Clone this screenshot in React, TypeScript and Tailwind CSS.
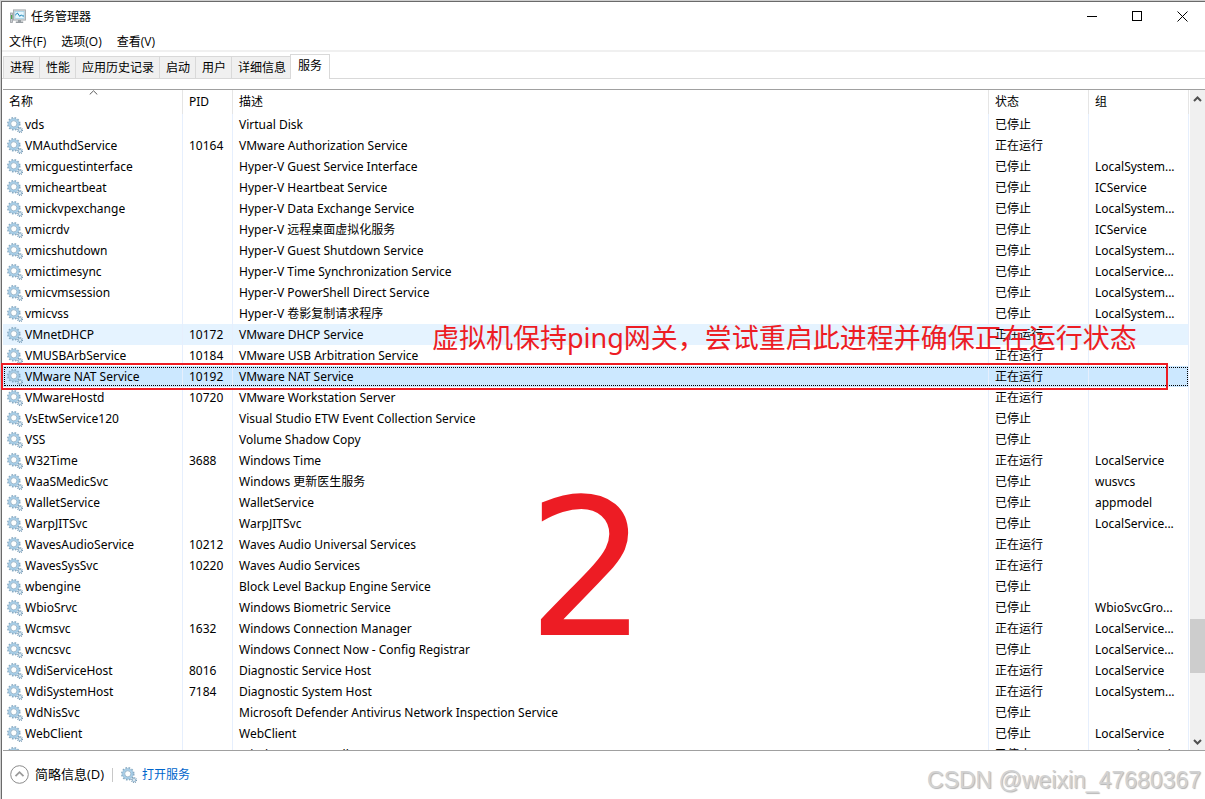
import React from "react";

type State = "已停止" | "正在运行";
type Service = [name: string, pid: string, description: string, state: State, group: string];

const services: Service[] = [
  ["vds", "", "Virtual Disk", "已停止", ""],
  ["VMAuthdService", "10164", "VMware Authorization Service", "正在运行", ""],
  ["vmicguestinterface", "", "Hyper-V Guest Service Interface", "已停止", "LocalSystem..."],
  ["vmicheartbeat", "", "Hyper-V Heartbeat Service", "已停止", "ICService"],
  ["vmickvpexchange", "", "Hyper-V Data Exchange Service", "已停止", "LocalSystem..."],
  ["vmicrdv", "", "Hyper-V 远程桌面虚拟化服务", "已停止", "ICService"],
  ["vmicshutdown", "", "Hyper-V Guest Shutdown Service", "已停止", "LocalSystem..."],
  ["vmictimesync", "", "Hyper-V Time Synchronization Service", "已停止", "LocalService..."],
  ["vmicvmsession", "", "Hyper-V PowerShell Direct Service", "已停止", "LocalSystem..."],
  ["vmicvss", "", "Hyper-V 卷影复制请求程序", "已停止", "LocalSystem..."],
  ["VMnetDHCP", "10172", "VMware DHCP Service", "正在运行", ""],
  ["VMUSBArbService", "10184", "VMware USB Arbitration Service", "正在运行", ""],
  ["VMware NAT Service", "10192", "VMware NAT Service", "正在运行", ""],
  ["VMwareHostd", "10720", "VMware Workstation Server", "正在运行", ""],
  ["VsEtwService120", "", "Visual Studio ETW Event Collection Service", "已停止", ""],
  ["VSS", "", "Volume Shadow Copy", "已停止", ""],
  ["W32Time", "3688", "Windows Time", "正在运行", "LocalService"],
  ["WaaSMedicSvc", "", "Windows 更新医生服务", "已停止", "wusvcs"],
  ["WalletService", "", "WalletService", "已停止", "appmodel"],
  ["WarpJITSvc", "", "WarpJITSvc", "已停止", "LocalService..."],
  ["WavesAudioService", "10212", "Waves Audio Universal Services", "正在运行", ""],
  ["WavesSysSvc", "10220", "Waves Audio Services", "正在运行", ""],
  ["wbengine", "", "Block Level Backup Engine Service", "已停止", ""],
  ["WbioSrvc", "", "Windows Biometric Service", "已停止", "WbioSvcGro..."],
  ["Wcmsvc", "1632", "Windows Connection Manager", "正在运行", "LocalService..."],
  ["wcncsvc", "", "Windows Connect Now - Config Registrar", "已停止", "LocalService..."],
  ["WdiServiceHost", "8016", "Diagnostic Service Host", "正在运行", "LocalService"],
  ["WdiSystemHost", "7184", "Diagnostic System Host", "正在运行", "LocalSystem..."],
  ["WdNisSvc", "", "Microsoft Defender Antivirus Network Inspection Service", "已停止", ""],
  ["WebClient", "", "WebClient", "已停止", "LocalService"],
  ["Wecsvc", "", "Windows Event Collector", "已停止", "NetworkService"],
];

const tabs = ["进程", "性能", "应用历史记录", "启动", "用户", "详细信息", "服务"];
const menus = ["文件(F)", "选项(O)", "查看(V)"];

function Gears() {
  return (
    <svg className="block size-4 shrink-0" viewBox="0 0 16 16" aria-hidden="true">
      <circle cx="6.8" cy="6.8" r="6" fill="none" stroke="#86a9c2" strokeWidth="1.5" strokeDasharray="1.7 1.44" />
      <circle cx="6.8" cy="6.8" r="4.3" fill="#f4f9fd" stroke="#a9d0ea" strokeWidth="2.2" />
      <circle cx="6.8" cy="6.8" r="5.3" fill="none" stroke="#8cb2cc" strokeWidth="0.6" />
      <circle cx="6.8" cy="6.8" r="3.1" fill="#fdfefe" stroke="#7b9db6" strokeWidth="0.7" />
      <circle cx="13" cy="13" r="2.5" fill="none" stroke="#7d9cb3" strokeWidth="1.2" strokeDasharray="1 0.96" />
      <circle cx="13" cy="13" r="1.5" fill="#fff" stroke="#93b7d0" strokeWidth="1.2" />
    </svg>
  );
}

function AppIcon() {
  return (
    <svg className="block h-4 w-4 shrink-0" viewBox="0 0 16 16" aria-hidden="true">
      <rect x="0.5" y="4" width="2" height="9.5" fill="#c9cdd0" stroke="#9a9fa3" strokeWidth="0.8" />
      <rect x="1" y="6" width="1.2" height="4" fill="#4aa84a" />
      <rect x="3.5" y="0.9" width="12" height="10.2" fill="#d3d6d8" stroke="#a3a8ac" strokeWidth="0.9" />
      <rect x="5" y="2.5" width="9" height="7" fill="#e6f6fd" stroke="#9fd2e8" strokeWidth="0.7" />
      <path d="M5.2 6.2 7.4 4l2.4 3.4 1.6-1.6 1 1.2H14" fill="none" stroke="#1583b7" strokeWidth="1" />
      <path d="M8 11h3v1.4h2.2V14H5.8v-1.6H8z" fill="#969da2" />
    </svg>
  );
}

const headCell = "relative h-6 border-r border-[#e5e5e5] p-0 pl-[6px] text-left font-normal";
const cell = "h-[21px] overflow-hidden border-r border-[#e6effd] p-0 pl-[6px] whitespace-nowrap";

function ServiceTable() {
  return (
    <table className="w-full table-fixed border-separate border-spacing-0 text-xs leading-5">
      <colgroup>
        <col className="w-[180px]" />
        <col className="w-[50px]" />
        <col />
        <col className="w-[100px]" />
        <col className="w-[100px]" />
      </colgroup>
      <thead>
        <tr>
          <th className={headCell}>
            名称
            <svg className="absolute top-0 left-[86px] h-[5px] w-[9px]" viewBox="0 0 9 5" aria-hidden="true">
              <path d="M0.7 4.5 4.5 0.8 8.3 4.5" fill="none" stroke="#5a5a5a" />
            </svg>
          </th>
          <th className={headCell}>PID</th>
          <th className={headCell}>描述</th>
          <th className={headCell}>状态</th>
          <th className={headCell}>组</th>
        </tr>
      </thead>
      <tbody>
        {services.map(([name, pid, description, state, group]) => (
          <tr
            key={name}
            className={
              name === "VMware NAT Service"
                ? "bg-[#cce8ff] outline-1 -outline-offset-2 outline-dotted outline-black"
                : name === "VMnetDHCP"
                  ? "bg-[#e5f3ff]"
                  : ""
            }
          >
            <td className="h-[21px] overflow-hidden border-r border-[#e6effd] p-0 pl-1 whitespace-nowrap">
              <div className="flex items-center gap-[2px]">
                <Gears />
                {name}
              </div>
            </td>
            <td className={cell}>{pid}</td>
            <td className={cell}>{description}</td>
            <td className={cell}>{state}</td>
            <td className={cell}>{group}</td>
          </tr>
        ))}
      </tbody>
    </table>
  );
}

function ScrollBar() {
  return (
    <div className="ml-px flex w-[15px] shrink-0 flex-col bg-[#f0f0f0]">
      <button aria-label="向上滚动" className="flex h-[17px] items-center justify-center">
        <svg className="h-[6px] w-[9px]" viewBox="0 0 9 6" aria-hidden="true">
          <path d="M1 5 4.5 1.5 8 5" fill="none" stroke="#505050" strokeWidth="2" />
        </svg>
      </button>
      <div className="flex-[512]" />
      <div className="h-[54px] bg-[#cdcdcd]" />
      <div className="flex-[60]" />
      <button aria-label="向下滚动" className="flex h-[17px] items-center justify-center">
        <svg className="h-[6px] w-[9px]" viewBox="0 0 9 6" aria-hidden="true">
          <path d="M1 1 4.5 4.5 8 1" fill="none" stroke="#505050" strokeWidth="2" />
        </svg>
      </button>
    </div>
  );
}

export default function App() {
  return (
    <div className="h-screen overflow-hidden border-t border-l border-[#cfcfcf] bg-white font-['Noto_Sans','Noto_Sans_CJK_SC',sans-serif] text-xs text-black">
      <div className="relative flex h-full flex-col border-t border-l border-[#6a6a6a]">
        <header className="flex h-[29px] items-center pl-2">
          <AppIcon />
          <h1 className="ml-[5px] flex-1">任务管理器</h1>
          <button aria-label="最小化" className="flex h-full w-[45px] items-center justify-center">
            <svg className="size-[11px]" viewBox="0 0 11 11" aria-hidden="true">
              <path d="M0 5.5h10" stroke="#000" />
            </svg>
          </button>
          <button aria-label="最大化" className="flex h-full w-[45px] items-center justify-center">
            <svg className="size-[11px]" viewBox="0 0 11 11" aria-hidden="true">
              <rect x="0.5" y="0.5" width="9" height="9" fill="none" stroke="#000" />
            </svg>
          </button>
          <button aria-label="关闭" className="flex h-full w-[45px] items-center justify-center">
            <svg className="size-[11px]" viewBox="0 0 11 11" aria-hidden="true">
              <path d="M0.5 0.5l10 10M10.5 0.5l-10 10" stroke="#000" />
            </svg>
          </button>
        </header>

        <nav className="flex h-[21px] items-center gap-[15px] border-b-2 border-[#f0f0f0] pt-[2px] pl-[7px]">
          {menus.map((label) => (
            <button key={label} className="font-['Open_Sans','Noto_Sans_CJK_SC',sans-serif]">
              {label}
            </button>
          ))}
        </nav>

        <div role="tablist" className="flex h-[27px] items-end border-b border-[#d9d9d9] pl-px">
          {tabs.map((label) =>
            label === "服务" ? (
              <button
                key={label}
                role="tab"
                aria-selected="true"
                className="-mb-px -ml-px h-[25px] border border-b-0 border-[#d9d9d9] bg-white px-[7px] pb-[2px]"
              >
                {label}
              </button>
            ) : (
              <button
                key={label}
                role="tab"
                aria-selected="false"
                className="h-[22px] border-t border-l border-[#d9d9d9] bg-[#f0f0f0] pr-[5px] pl-[6px]"
              >
                {label}
              </button>
            ),
          )}
        </div>

        <main className="relative mt-[10px] ml-px flex min-h-0 flex-1 border-y border-[#a0a0a0]">
          <div className="min-w-0 flex-1 overflow-hidden">
            <ServiceTable />
          </div>
          <ScrollBar />
          <div className="pointer-events-none absolute top-[273px] right-[37px] -left-[2px] h-[27px] border-2 border-[#ed1c24]" />
          <p className="pointer-events-none absolute top-[228px] left-[429px] text-[27px] leading-10 whitespace-nowrap text-[#ed1c24]">
            虚拟机保持ping网关，尝试重启此进程并确保正在运行状态
          </p>
          <p className="pointer-events-none absolute top-[380px] left-[524px] font-['DejaVu_Sans',sans-serif] text-[190px] leading-[200px] text-[#ed1c24]">
            2
          </p>
        </main>

        <footer className="flex h-12 items-center pb-px pl-2">
          <button className="flex items-center gap-[6px] text-[13px]">
            <svg className="size-[19px]" viewBox="0 0 19 19" aria-hidden="true">
              <circle cx="9.5" cy="9.5" r="8.8" fill="#fff" stroke="#8c8c8c" />
              <path d="M5.5 11.2 9.5 7.2l4 4" fill="none" stroke="#9a9a9a" strokeWidth="1.8" />
            </svg>
            <span className="font-['Open_Sans','Noto_Sans_CJK_SC',sans-serif]">简略信息(D)</span>
          </button>
          <div className="ml-2 h-[14px] w-px bg-[#c8c8c8]" />
          <a href="#services" className="ml-2 flex items-center gap-[5px] text-[#0066cc]">
            <Gears />
            打开服务
          </a>
        </footer>

        <p className="pointer-events-none absolute right-1 bottom-[5px] font-['Liberation_Sans',sans-serif] text-[23px] leading-7 text-[#d2d2d2] [text-shadow:1px_1px_1px_#b4b4b4]">
          CSDN @weixin_47680367
        </p>
      </div>
    </div>
  );
}
